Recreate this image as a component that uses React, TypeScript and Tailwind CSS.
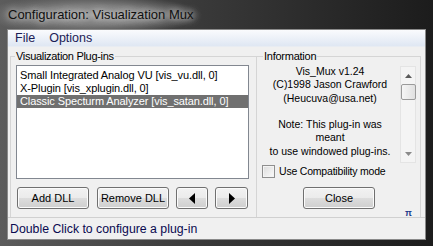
import React from "react";

const plugins = [
  "Small Integrated Analog VU [vis_vu.dll, 0]",
  "X-Plugin [vis_xplugin.dll, 0]",
  "Classic Specturm Analyzer [vis_satan.dll, 0]",
];

const infoLines = [
  "Vis_Mux v1.24",
  "(C)1998 Jason Crawford",
  "(Heucuva@usa.net)",
  "\u00a0",
  "Note: This plug-in was",
  "meant",
  "to use windowed plug-ins.",
];

const WinButton = ({
  children,
  className = "",
}: {
  children: React.ReactNode;
  className?: string;
}) => (
  <button
    className={`h-[22px] shrink-0 whitespace-nowrap rounded-[3px] border border-[#707070] bg-[linear-gradient(#f2f2f2_0%,#ebebeb_50%,#dddddd_50%,#cfcfcf_100%)] text-[11px] leading-none text-black flex items-center justify-center shadow-[inset_0_0_0_1px_#fbfbfb] ${className}`}
  >
    {children}
  </button>
);

const App = () => {
  return (
    <div className="w-[433px] h-[246px] overflow-hidden flex flex-col bg-[linear-gradient(90deg,#5c5c5c_0%,#3a3a3a_45%,#1c1c1c_100%)] font-['Liberation_Sans',sans-serif]">
      {/* title bar */}
      <div className="h-[29px] shrink-0 flex items-center pl-[8px] pt-[1px] bg-[radial-gradient(ellipse_110px_20px_at_92px_15px,#9a9a9a_0%,#7a7a7a_50%,transparent_100%)]">
        <span className="text-[13px] text-[#101010] [text-shadow:0_0_6px_#d8d8d8,0_0_10px_#cfcfcf]">
          Configuration: Visualization Mux
        </span>
      </div>

      {/* client area */}
      <div className="flex-1 mx-[7px] mb-[6px] border border-[#8a8a8a] bg-[#f0f0f0] flex flex-col">
        {/* menu */}
        <div className="h-[17px] shrink-0 flex items-center gap-[14px] pl-[7px] bg-[linear-gradient(#fafbfd,#dfe7f3)] border-b border-[#e8ecf2] text-[12.5px] leading-[15px] text-[#1b2055]">
          <span>File</span>
          <span>Options</span>
        </div>

        {/* body */}
        <div className="flex-1 flex min-h-0 border-b border-[#d0d0d0]">
          {/* left */}
          <div className="w-[248px] shrink-0 flex flex-col pl-[2px] pt-[3px]">
            <fieldset className="flex-1 border-t border-l border-[#d5d5d5] pl-[5px] pr-[7px] pt-0 pb-0 min-w-0">
              <legend className="text-[11px] leading-[13px] tracking-[-0.3px] text-black pl-[1px] pr-[1px] ml-[-1px]">
                Visualization Plug-ins
              </legend>
              <div className="mt-[2px] h-[114px] border border-[#828790] bg-white pt-[3px] text-[11px] leading-[13px] tracking-[-0.1px]">
                {plugins.map((p, i) => (
                  <div
                    key={p}
                    className={`pl-[3px] whitespace-nowrap overflow-hidden ${
                      i === 2 ? "bg-[#707070] text-white" : "text-black"
                    }`}
                  >
                    {p}
                  </div>
                ))}
              </div>
              <div className="flex mt-[8px] gap-[7px] pl-[1px]">
                <WinButton className="w-[72px]">Add DLL</WinButton>
                <WinButton className="w-[72px] ml-[1px]">Remove DLL</WinButton>
                <WinButton className="w-[32px]">
                  <svg width="6" height="11" viewBox="0 0 6 11">
                    <path d="M6 0 L0 5.5 L6 11 Z" fill="#000" />
                  </svg>
                </WinButton>
                <WinButton className="w-[33px]">
                  <svg width="6" height="11" viewBox="0 0 6 11">
                    <path d="M0 0 L6 5.5 L0 11 Z" fill="#000" />
                  </svg>
                </WinButton>
              </div>
            </fieldset>
          </div>

          {/* right */}
          <div className="flex-1 min-w-0 flex flex-col pt-[3px] pr-[4px]">
            <fieldset className="flex-1 border-t border-l border-r border-[#d5d5d5] pl-[5px] pr-[4px] pt-0 pb-0 min-w-0">
              <legend className="text-[11px] leading-[13px] tracking-[-0.25px] text-black ml-[1px] pl-[1px] pr-[1px]">
                Information
              </legend>
              <div className="flex h-[99px] mt-[1px]">
                <div className="flex-1 min-w-0 text-center text-[10.5px] leading-[13.3px] text-black pt-[1px] pr-[2px]">
                  {infoLines.map((l, i) => (
                    <div key={i} className="whitespace-nowrap">
                      {l}
                    </div>
                  ))}
                </div>
                <div className="w-[16px] h-[97px] mt-[2px] shrink-0 border border-[#e4e4e4] bg-[#f4f4f4] flex flex-col items-center justify-between pt-[7px] pb-[6px]">
                  <div className="flex flex-col items-center gap-[6px]">
                    <svg width="7" height="4" viewBox="0 0 7 4">
                      <path d="M3.5 0 L7 4 L0 4 Z" fill="#5a5a5a" />
                    </svg>
                    <div className="w-[15px] h-[16px] rounded-[2px] border border-[#9a9a9a] bg-[linear-gradient(90deg,#f6f6f6,#e0e0e0)]" />
                  </div>
                  <svg width="7" height="4" viewBox="0 0 7 4">
                    <path d="M0 0 L7 0 L3.5 4 Z" fill="#8a8a8a" />
                  </svg>
                </div>
              </div>
              <label className="flex items-center gap-[4px] mt-[2px] text-[10.5px] leading-[13px] tracking-[-0.2px] text-black">
                <span className="w-[13px] h-[13px] shrink-0 border border-[#8f8f8f] bg-[linear-gradient(135deg,#dcdcdc,#fbfbfb)] shadow-[inset_0_0_0_1px_#f4f4f4]" />
                Use Compatibility mode
              </label>
              <div className="flex justify-center mt-[9px]">
                <WinButton className="w-[72px]">Close</WinButton>
              </div>
              <div className="flex justify-end h-[6px] pr-[4px] text-[9px] leading-[8px] font-bold text-[#1b3a8a]">
                π
              </div>
            </fieldset>
          </div>
        </div>

        {/* status */}
        <div className="h-[21px] shrink-0 flex items-center pl-[2px] pt-[2px] text-[12.3px] leading-[15px] text-[#0a0a50]">
          Double Click to configure a plug-in
        </div>
      </div>
    </div>
  );
};

export default App;
